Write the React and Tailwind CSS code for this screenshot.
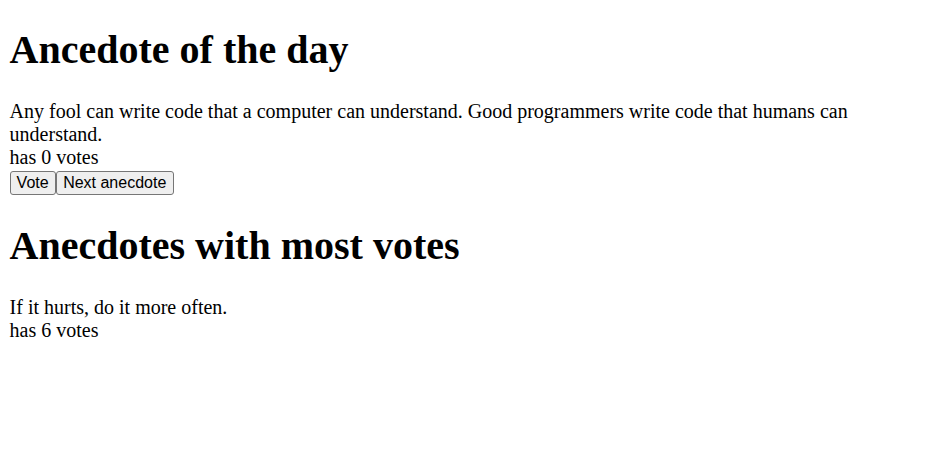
export default function App() {
  return (
    <div className="min-h-screen bg-white px-[9.6px] py-px text-black font-['Liberation_Serif','Times_New_Roman',serif] text-[20px] leading-[23px]">
      <h1 className="mt-[25.8px] mb-[26.8px] text-[40px] font-bold leading-[46px]">Ancedote of the day</h1>
      <div>
        Any fool can write code that a computer can understand. Good programmers write code that humans can understand.
      </div>
      <div>has 0 votes</div>
      <div className="mt-[2px] flex">
        <button className="rounded-[3px] border border-[#767676] bg-[#efefef] px-[6px] py-[2px] font-['Liberation_Sans',Arial,sans-serif] text-[16px] leading-[18px]">
          Vote
        </button>
        <button className="rounded-[3px] border border-[#767676] bg-[#efefef] px-[6.5px] py-[2px] font-['Liberation_Sans',Arial,sans-serif] text-[16px] leading-[18px]">
          Next anecdote
        </button>
      </div>
      <h1 className="mt-[28.5px] mb-[26.8px] text-[40px] font-bold leading-[46px]">Anecdotes with most votes</h1>
      <div>If it hurts, do it more often.</div>
      <div>has 6 votes</div>
    </div>
  )
}
